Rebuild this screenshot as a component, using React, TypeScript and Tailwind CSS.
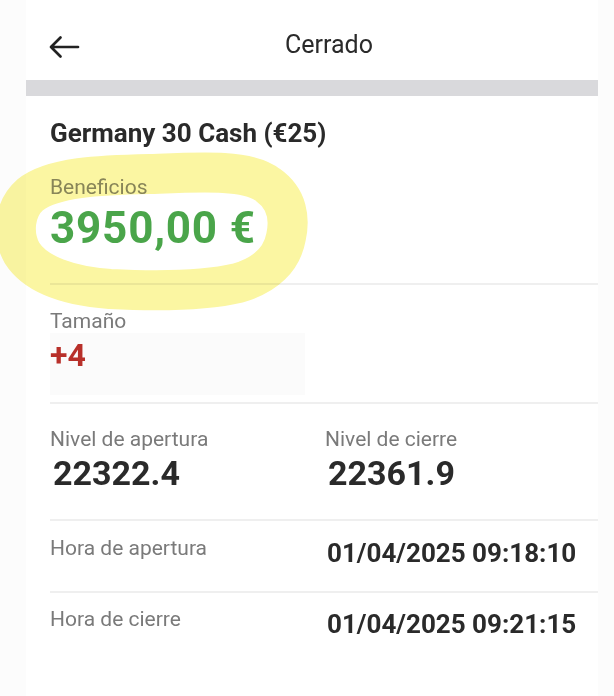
import React from "react";

function BackArrow() {
  return (
    <svg width="34" height="26" viewBox="0 0 34 26" fill="none">
      <path d="M31 13H4M13.5 3.5L4 13l9.5 9.5" stroke="#222" strokeWidth="2.7" strokeLinecap="round" strokeLinejoin="round" />
    </svg>
  );
}

function Highlight() {
  return (
    <svg
      className="pointer-events-none absolute left-0 top-[139px] mix-blend-multiply"
      width="320"
      height="180"
      viewBox="0 0 320 180"
    >
      <path
        d="M150 35 C200 33 248 30 268 46 C288 60 290 80 286 98 C282 120 266 136 238 144 C200 153 150 152 110 150 C70 147 36 136 22 114 C12 96 14 70 30 56 C52 38 100 36 150 35 Z"
        fill="none"
        stroke="#fbf6a2"
        strokeWidth="40"
        strokeLinejoin="round"
      />
    </svg>
  );
}

const label = "text-[21px] leading-[24px] text-[#7a7a7a]";
const divider = "h-[2px] bg-[#efefef]";

export default function App() {
  return (
    <div
      className="relative min-h-[696px] w-[614px] bg-[#fcfcfc]"
      style={{ fontFamily: "Roboto, 'Liberation Sans', sans-serif" }}
    >
      <div className="ml-[26px] flex min-h-[696px] w-[572px] flex-col bg-white">
        <div className="relative h-[80px]">
          <div className="absolute left-[21px] top-[34px]">
            <BackArrow />
          </div>
          <div className="absolute left-[259px] top-[30px] text-[25px] leading-[30px] text-[#2a2a2a]">Cerrado</div>
        </div>
        <div className="h-[16px] bg-[#d9d9dc]" />

        <div className="flex flex-col pl-[24px]">
          <div className="pt-[21px] text-[26px] font-bold leading-[32px] text-[#2a2a2a]">
            Germany 30 Cash (€25)
          </div>
          <div className="mt-[26px] text-[21px] leading-[24px] text-[#8a8a8a]">Beneficios</div>
          <div className="mt-[5px] text-[44px] font-bold leading-[48px] text-[#4aa54a] tracking-[0.8px]">3950,00 €</div>
          <div className={`mt-[31px] ${divider}`} />

          <div className={`pt-[24px] ${label}`}>Tamaño</div>
          <div className="h-[62px] w-[255px] bg-[#fbfbfb] pt-[4px] text-[32px] font-bold leading-[36px] text-[#b8302a]">+4</div>
          <div className={`mt-[7px] ${divider}`} />

          <div className="grid grid-cols-[275px_1fr] pt-[23px]">
            <div className={label}>Nivel de apertura</div>
            <div className={label}>Nivel de cierre</div>
            <div className="mt-[2px] pl-[3px] text-[34px] font-bold leading-[40px] text-[#2a2a2a]">22322.4</div>
            <div className="mt-[2px] pl-[3px] text-[34px] font-bold leading-[40px] text-[#2a2a2a]">22361.9</div>
          </div>
          <div className={`mt-[26px] ${divider}`} />

          <div className="grid h-[70px] grid-cols-[277px_1fr] items-start pt-[15px]">
            <div className={label}>Hora de apertura</div>
            <div className="pt-[2px] text-[26px] font-bold leading-[30px] text-[#2a2a2a]">01/04/2025 09:18:10</div>
          </div>
          <div className={divider} />
          <div className="grid grid-cols-[277px_1fr] items-start pt-[14px]">
            <div className={label}>Hora de cierre</div>
            <div className="pt-[2px] text-[26px] font-bold leading-[30px] text-[#2a2a2a]">01/04/2025 09:21:15</div>
          </div>
        </div>
      </div>
      <Highlight />
    </div>
  );
}
